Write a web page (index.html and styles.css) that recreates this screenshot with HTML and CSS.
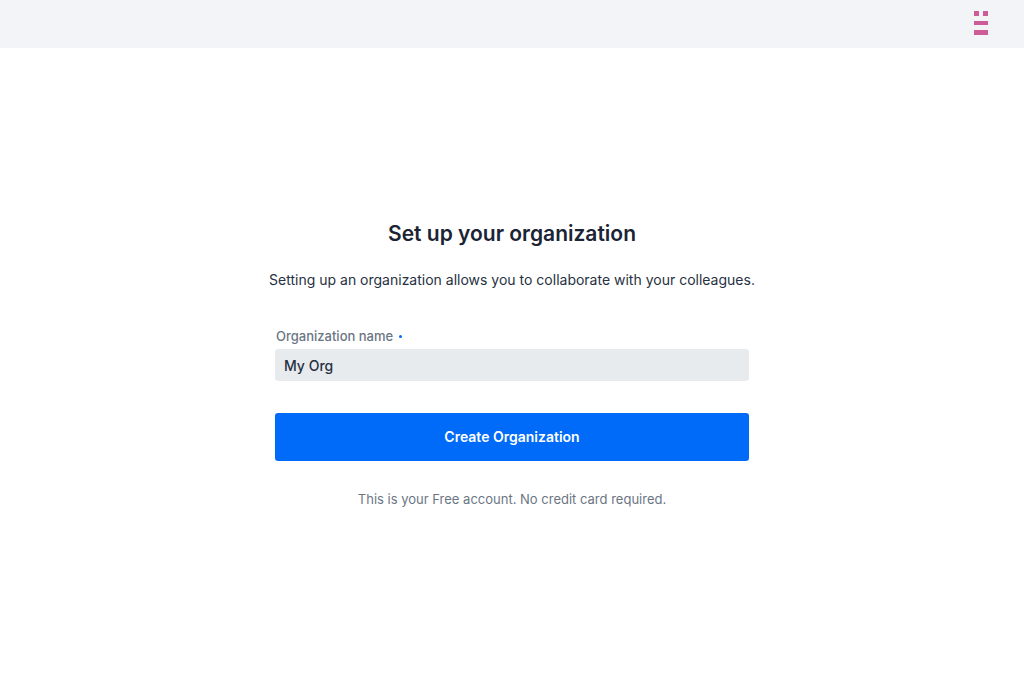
FILE: index.html
```
<!DOCTYPE html>
<html lang="en">
<head>
<meta charset="utf-8">
<title>Set up your organization</title>
<link rel="stylesheet" href="styles.css">
</head>
<body>
<header class="topbar">
  <button class="avatar" type="button" aria-label="Account">
    <svg width="24" height="24" viewBox="0 0 24 24" fill="#cd5b97" shape-rendering="crispEdges" aria-hidden="true">
      <path d="M5 0h5v5H5zM14 0h5v5h-5zM5 10h14v4H5zM5 19h14v5H5z"/>
    </svg>
  </button>
</header>
<main class="page">
  <form class="setup">
    <h1 class="title">Set up your organization</h1>
    <p class="intro">Setting up an organization allows you to collaborate with your colleagues.</p>
    <label class="label" for="org">Organization name<span class="required"></span></label>
    <input class="field" id="org" type="text" value="My Org" required>
    <button class="submit" type="submit">Create Organization</button>
    <p class="note">This is your Free account. No credit card required.</p>
  </form>
</main>
</body>
</html>
```
FILE: styles.css
```
* { box-sizing: border-box; }
body {
  margin: 0;
  min-height: 100vh;
  display: flex;
  flex-direction: column;
  background: #fff;
  color: #273142;
  font: 14px/20px Inter, "Liberation Sans", sans-serif;
}
.topbar {
  display: flex;
  align-items: center;
  justify-content: flex-end;
  height: 48px;
  padding: 0 31px 2px;
  background: #f2f4f7;
}
.avatar {
  display: flex;
  padding: 0;
  border: 0;
  border-radius: 4px;
  background: #f1f3f5;
}
.page {
  flex: 1;
  display: flex;
  align-items: center;
  justify-content: center;
  padding: 0 16px;
}
.setup {
  display: flex;
  flex-direction: column;
  width: 474px;
  max-width: 100%;
}
.title {
  margin: 0 0 22px;
  font-size: 21px;
  line-height: 28px;
  font-weight: 600;
  text-align: center;
  color: #1a2434;
}
.intro {
  margin: 0 -8px 36px;
  text-align: center;
}
.label {
  display: flex;
  align-items: center;
  gap: 6px;
  padding: 0 1px;
  margin-bottom: 3px;
  font-size: 13px;
  font-weight: 500;
  color: #6b7684;
}
.required {
  width: 3px;
  height: 3px;
  border-radius: 50%;
  background: #006bf8;
}
.field {
  width: 100%;
  height: 32px;
  padding: 0 9px;
  border: 0;
  border-radius: 3px;
  outline: 0;
  background: #e7ebee;
  color: inherit;
  font: inherit;
  font-weight: 500;
}
.submit {
  height: 48px;
  margin-top: 32px;
  border: 0;
  border-radius: 3px;
  background: #006bf8;
  color: #fff;
  font: inherit;
  font-weight: 600;
}
.note {
  margin: 28px 0 0;
  font-size: 13px;
  text-align: center;
  color: #6b7684;
}
```
